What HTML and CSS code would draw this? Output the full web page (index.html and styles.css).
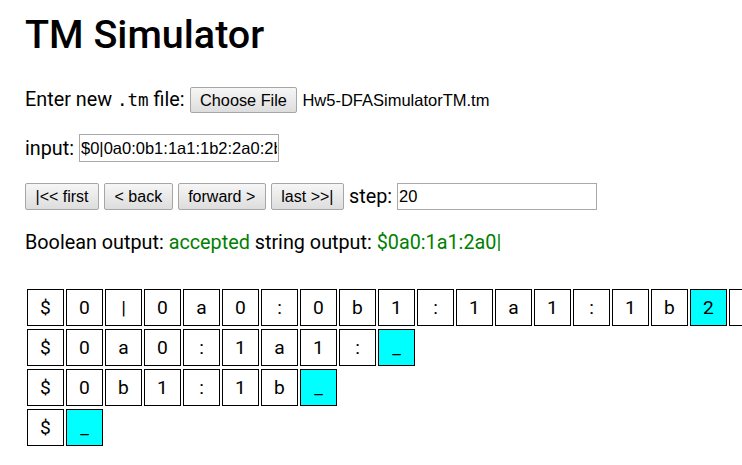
FILE: index.html
```html
<!DOCTYPE html>
<html lang="en">
<head>
<meta charset="utf-8">
<title>TM Simulator</title>
<link rel="stylesheet" href="styles.css">
</head>
<body>
<div class="page">
  <h1 class="title">TM Simulator</h1>

  <div class="row row-file">
    <span class="label">Enter new <code class="ext">.tm</code> file:</span>
    <button class="btn btn-file" type="button">Choose File</button>
    <span class="fname">Hw5-DFASimulatorTM.tm</span>
  </div>

  <div class="row row-input">
    <label class="label" for="tm-input">input:</label>
    <input class="field" id="tm-input" type="text" value="$0|0a0:0b1:1a1:1b2:2a0:2b0:">
  </div>

  <div class="row row-nav">
    <button class="btn" type="button">|&lt;&lt; first</button>
    <button class="btn" type="button">&lt; back</button>
    <button class="btn" type="button">forward &gt;</button>
    <button class="btn" type="button">last &gt;&gt;|</button>
    <label class="label" for="tm-step">step:</label>
    <input class="field" id="tm-step" type="text" value="20">
  </div>

  <div class="output">Boolean output: <span class="ok">accepted</span> string output: <span class="ok">$0a0:1a1:2a0|</span></div>

  <div class="tapes">
    <div class="tape">
      <span class="cell">$</span><span class="cell">0</span><span class="cell">|</span><span class="cell">0</span><span class="cell">a</span><span class="cell">0</span><span class="cell">:</span><span class="cell">0</span><span class="cell">b</span><span class="cell">1</span><span class="cell">:</span><span class="cell">1</span><span class="cell">a</span><span class="cell">1</span><span class="cell">:</span><span class="cell">1</span><span class="cell">b</span><span class="cell head">2</span><span class="cell"></span>
    </div>
    <div class="tape">
      <span class="cell">$</span><span class="cell">0</span><span class="cell">a</span><span class="cell">0</span><span class="cell">:</span><span class="cell">1</span><span class="cell">a</span><span class="cell">1</span><span class="cell">:</span><span class="cell head">_</span>
    </div>
    <div class="tape">
      <span class="cell">$</span><span class="cell">0</span><span class="cell">b</span><span class="cell">1</span><span class="cell">:</span><span class="cell">1</span><span class="cell">b</span><span class="cell head">_</span>
    </div>
    <div class="tape">
      <span class="cell">$</span><span class="cell head">_</span>
    </div>
  </div>
</div>
</body>
</html>
```

FILE: styles.css
```css
html, body {
  margin: 0;
  padding: 0;
  background: #fff;
  overflow: hidden;
}

body {
  font-family: Roboto, "Liberation Sans", sans-serif;
  font-size: 19.8px;
  color: #000;
}

.page {
  padding: 12px 0 0 25px;
}

.title {
  margin: 0;
  font-size: 39.5px;
  font-weight: 500;
  line-height: 45px;
  height: 45px;
}

.row {
  display: flex;
  align-items: center;
  gap: 5px;
  white-space: nowrap;
}

.row-file {
  margin-top: 29px;
  height: 28px;
}

.row-input {
  margin-top: 20px;
  height: 28px;
}

.row-nav {
  margin-top: 21px;
  height: 27px;
}

.label {
  line-height: 23px;
}

.ext {
  font-family: "DejaVu Sans Mono", "Liberation Mono", monospace;
  font-size: 17.5px;
}

.btn {
  box-sizing: border-box;
  height: 27px;
  padding: 0 9.5px;
  font-family: "Liberation Sans", Arial, sans-serif;
  font-size: 16px;
  color: #000;
  background: linear-gradient(#f6f6f6, #dddddd);
  border: 1px solid #a6a6a6;
  border-radius: 2px;
}

.btn-file {
  height: 26px;
  font-size: 16.3px;
}

.fname {
  font-family: "Liberation Sans", Arial, sans-serif;
  font-size: 16.5px;
}

.field {
  box-sizing: border-box;
  width: 200px;
  height: 28px;
  margin: 0;
  padding: 0 1px;
  font-family: "Liberation Sans", Arial, sans-serif;
  font-size: 16.5px;
  color: #000;
  background: #fff;
  border: 1px solid #a9a9a9;
  border-radius: 0;
  outline: none;
}

.row-nav .field {
  height: 27px;
}

.output {
  margin-top: 21px;
  line-height: 23px;
  white-space: nowrap;
}

.ok {
  color: #008000;
}

.tapes {
  margin: 35px 0 0 2px;
  display: flex;
  flex-direction: column;
  gap: 3px;
  overflow: hidden;
}

.tape {
  display: flex;
  gap: 2px;
}

.cell {
  box-sizing: border-box;
  flex: 0 0 37px;
  width: 37px;
  height: 37px;
  display: flex;
  align-items: center;
  justify-content: center;
  border: 1px solid #000;
  font-size: 19.2px;
}

.head {
  background: #00ffff;
}
```
